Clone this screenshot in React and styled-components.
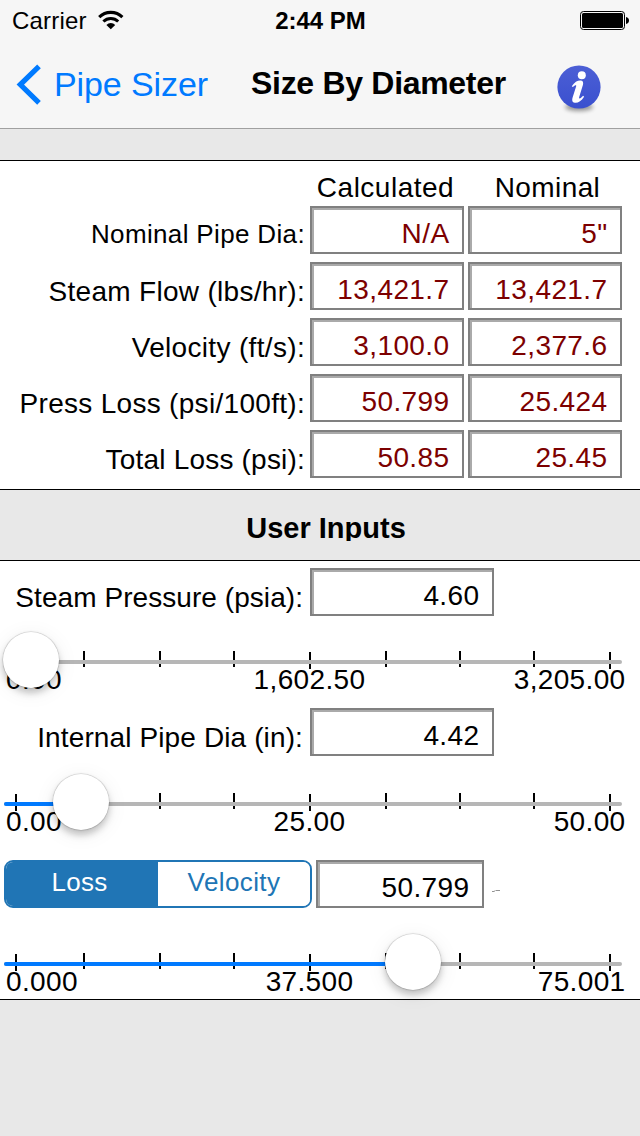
import React from 'react';
import styled, { createGlobalStyle } from 'styled-components';

const Global = createGlobalStyle`
  * { box-sizing: border-box; }
  body {
    margin: 0;
    background: #e8e8e8;
    color: #000;
    font-family: "Liberation Sans", Arial, sans-serif;
  }
`;

const Screen = styled.div`
  display: flex;
  flex-direction: column;
  width: 640px;
  height: 1136px;
  overflow: hidden;
  background: #e8e8e8;
`;

const Text = styled.span`
  display: block;
  white-space: nowrap;
  font-size: ${p => p.$size || 28}px;
  font-weight: ${p => (p.$bold ? 700 : 400)};
  line-height: ${p => p.$line || 40}px;
  letter-spacing: ${p => p.$track || 0}px;
`;

const Header = styled.header`
  height: 129px;
  background: #f6f6f6;
  border-bottom: 1px solid #a0a0a0;
`;

const StatusBar = styled.div`
  display: grid;
  grid-template-columns: 1fr auto 1fr;
  height: 40px;
  padding: 0 11px 0 12px;
`;

const Carrier = styled.div`
  display: flex;
  gap: 11px;
  svg { margin-top: 10px; }
`;

const BatterySlot = styled.div`
  display: flex;
  justify-content: flex-end;
  padding-top: 11px;
`;

const NavBar = styled.nav`
  display: grid;
  grid-template-columns: 251px 306px 1fr;
  height: 88px;
`;

const BackButton = styled.div`
  display: flex;
  gap: 12px;
  padding-left: 16px;
  color: #007aff;
  svg { margin-top: 24px; }
`;

const InfoButton = styled.div`
  padding-top: 23px;
`;

const Panel = styled.section`
  background: #fff;
  border-top: 1px solid #000;
  border-bottom: 1px solid #000;
`;

const Results = styled(Panel)`
  height: 330px;
  margin-top: 31px;
`;

const Inputs = styled(Panel)`
  height: 440px;
`;

const ColumnHeads = styled.div`
  display: grid;
  grid-template-columns: 151px 173px;
  height: 45px;
  padding-top: 7px;
  margin-left: 310px;
  text-align: center;
`;

const ResultRow = styled.div`
  display: grid;
  grid-template-columns: 306px 154px 154px;
  column-gap: 4px;
  height: 56px;
`;

const RowLabel = styled.div`
  display: flex;
  justify-content: flex-end;
  padding-top: ${p => p.$top}px;
  padding-right: ${p => p.$right || 0}px;
`;

const Field = styled.div`
  width: ${p => p.$width}px;
  height: 48px;
  padding: 4px 12.5px 0 0;
  border: 2px solid #808080;
  box-shadow: inset 2px 2px 0 #aaa;
  background: #fff;
  color: ${p => p.$color || '#000'};
  font-size: 28px;
  line-height: 44px;
  letter-spacing: 0.4px;
  text-align: right;
`;

const SectionTitle = styled.h2`
  display: flex;
  justify-content: center;
  height: 70px;
  margin: 0;
  padding: 18px 0 0 12px;
`;

const TitleClip = styled.div`
  height: 33px;
  overflow: hidden;
`;

const InputRow = styled.div`
  display: grid;
  grid-template-columns: 303px auto;
  column-gap: 7px;
  justify-content: start;
  height: 48px;
  margin-top: ${p => p.$top}px;
`;

const ModeRow = styled.div`
  display: flex;
  gap: 4px;
  height: 48px;
  margin-top: ${p => p.$top}px;
  padding-left: 4px;
  svg { margin: 28px 0 0 4px; }
`;

const Segmented = styled.div`
  display: grid;
  grid-template-columns: 152px 152px;
  width: 308px;
  border: 2px solid #2075b5;
  border-radius: 9px;
  overflow: hidden;
`;

const Segment = styled.div`
  display: flex;
  justify-content: center;
  padding-right: ${p => (p.$active ? 5 : 0)}px;
  background: ${p => (p.$active ? '#2075b5' : '#fff')};
  color: ${p => (p.$active ? '#fff' : '#2075b5')};
`;

const SliderBox = styled.div`
  display: grid;
  grid-template-columns: 640px;
  grid-template-rows: 62px;
  margin-top: ${p => p.$top}px;
  > * { grid-area: 1 / 1; }
`;

const Ticks = styled.div`
  display: grid;
  grid-template-columns: 68px 76px 74px 76px 76px 74px 74px 76px 2px;
  margin: 19px 0 0 15px;
`;

const Tick = styled.i`
  width: 2px;
  height: ${p => (p.$major ? 17 : 16)}px;
  margin-top: ${p => (p.$major ? 1 : 0)}px;
  background: #000;
`;

const ScaleLabels = styled.div`
  display: grid;
  grid-template-columns: 199px 209px 218px;
  padding: 28px 0 0 6px;
  > :nth-child(2) { text-align: center; }
  > :last-child { text-align: right; padding-right: 6.5px; }
`;

const Track = styled.div`
  width: 618px;
  height: 4px;
  margin: 28px 0 0 4px;
  border-radius: 2px;
  background: #b6b6b6;
`;

const Fill = styled.div`
  height: 4px;
  border-radius: 2px;
  background: #007aff;
`;

const Thumb = styled.div`
  width: 56px;
  height: 56px;
  border-radius: 50%;
  background: #fff;
  box-shadow: 0 0 1px 0.5px rgba(0, 0, 0, 0.2), 0 5px 7px rgba(0, 0, 0, 0.22), 0 4px 22px rgba(0, 0, 0, 0.07);
  z-index: 1;
`;

const WifiIcon = () => (
  <svg width="26" height="20" viewBox="0 0 26 20" fill="none" stroke="#000">
    <path d="M1.2 7.1a16.6 16.6 0 0 1 23.2 0" strokeWidth="3.1" />
    <path d="M5.4 11.5a10.6 10.6 0 0 1 14.8 0" strokeWidth="3" />
    <path d="M12.8 19.2 8.4 14.9a6.3 6.3 0 0 1 8.8 0z" fill="#000" stroke="none" />
  </svg>
);

const BatteryIcon = () => (
  <svg width="49" height="19" viewBox="0 0 49 19">
    <rect x="0.5" y="0.5" width="44" height="18" rx="3" fill="none" stroke="#000" />
    <rect x="2" y="2" width="41" height="15" rx="1.5" />
    <path d="M46 6c2 .4 3 1.7 3 3.5s-1 3.1-3 3.5z" />
  </svg>
);

const ChevronIcon = () => (
  <svg width="26" height="42" viewBox="0 0 26 42" fill="none" stroke="#007aff" strokeWidth="5.2">
    <path d="M23 2.3 4.3 20.6 23 38.9" />
  </svg>
);

const InfoIcon = () => (
  <svg width="46" height="54" viewBox="0 0 46 54">
    <defs>
      <filter id="soft" x="-20%" y="-60%" width="140%" height="220%">
        <feGaussianBlur stdDeviation="2" />
      </filter>
      <linearGradient id="disc" x1="0" y1="0" x2="0" y2="1">
        <stop offset="0" stopColor="#4c5fd5" />
        <stop offset="1" stopColor="#3a50cf" />
      </linearGradient>
    </defs>
    <ellipse cx="22" cy="44" rx="14" ry="4" fill="#000" opacity="0.4" filter="url(#soft)" />
    <circle cx="22" cy="24" r="21.6" fill="url(#disc)" />
    <circle cx="24.800" cy="12.2" r="4" fill="#fff" />
    <path d="M14.8 23.2c2.800-4.600 6.700-6.200 9.200-5.700 2.200.4 2.500 2.400 1.900 4.600l-3.700 11.900c-.4 1.500.5 1.900 1.600 1l2.300-2.200 1 1c-2.900 4.400-6.300 6.500-9.300 6-2.600-.4-3-2.700-2.200-5.300l3.500-11c.4-1.400-.3-1.700-1.300-.9l-2 1.500z" fill="#fff" />
  </svg>
);

const SmudgeMark = () => (
  <svg width="10" height="5" viewBox="0 0 10 5" fill="none" stroke="#777">
    <path d="M0 3.500h2l1-.7M3.500 2.500h4.500" strokeWidth="0.8" />
  </svg>
);

const results = [
  { label: 'Nominal Pipe Dia:', calc: 'N/A', nominal: '5"', top: 8, size: 26, track: 0.35 },
  { label: 'Steam Flow (lbs/hr):', calc: '13,421.7', nominal: '13,421.7', top: 10, track: 0.3 },
  { label: 'Velocity (ft/s):', calc: '3,100.0', nominal: '2,377.6', top: 10, track: 0.33 },
  { label: 'Press Loss (psi/100ft):', calc: '50.799', nominal: '25.424', top: 10, track: 0.3 },
  { label: 'Total Loss (psi):', calc: '50.85', nominal: '25.45', top: 10, track: 0.2 },
];

function Slider({ top, labels, center, fill }) {
  return (
    <SliderBox $top={top}>
      <Ticks>
        {[0, 1, 2, 3, 4, 5, 6, 7, 8].map(i => <Tick key={i} $major={i % 4 === 0} />)}
      </Ticks>
      <ScaleLabels>
        {labels.map(l => <Text key={l} $track={0.35}>{l}</Text>)}
      </ScaleLabels>
      <Track>{fill && <Fill style={{ width: center - 4 }} />}</Track>
      <Thumb style={{ marginLeft: center - 28 }} />
    </SliderBox>
  );
}

export default function App() {
  return (
    <Screen>
      <Global />
      <Header>
        <StatusBar>
          <Carrier>
            <Text $size={24} $line={41} $track={0.2}>Carrier</Text>
            <WifiIcon />
          </Carrier>
          <Text $size={24} $line={41} $bold>2:44 PM</Text>
          <BatterySlot><BatteryIcon /></BatterySlot>
        </StatusBar>
        <NavBar>
          <BackButton>
            <ChevronIcon />
            <Text $size={34} $line={88} $track={-0.1}>Pipe Sizer</Text>
          </BackButton>
          <Text $size={32} $line={86} $track={-0.3} $bold>Size By Diameter</Text>
          <InfoButton><InfoIcon /></InfoButton>
        </NavBar>
      </Header>

      <Results>
        <ColumnHeads>
          <Text $track={0.5}>Calculated</Text>
          <Text $track={0.4}>Nominal</Text>
        </ColumnHeads>
        {results.map(r => (
          <ResultRow key={r.label}>
            <RowLabel $top={r.top} $right={1}><Text $size={r.size} $track={r.track}>{r.label}</Text></RowLabel>
            <Field $width={154} $color="#7c0000">{r.calc}</Field>
            <Field $width={154} $color="#7c0000">{r.nominal}</Field>
          </ResultRow>
        ))}
      </Results>

      <SectionTitle>
        <TitleClip><Text $size={29} $bold>User Inputs</Text></TitleClip>
      </SectionTitle>

      <Inputs>
        <InputRow $top={7}>
          <RowLabel $top={10}><Text $track={0.06}>Steam Pressure (psia):</Text></RowLabel>
          <Field $width={184}>4.60</Field>
        </InputRow>
        <Slider top={16} labels={['0.00', '1,602.50', '3,205.00']} center={31} />
        <InputRow $top={14}>
          <RowLabel $top={10}><Text $track={0.12}>Internal Pipe Dia (in):</Text></RowLabel>
          <Field $width={184}>4.42</Field>
        </InputRow>
        <Slider top={18} labels={['0.00', '25.00', '50.00']} center={81} fill />
        <ModeRow $top={24}>
          <Segmented>
            <Segment $active><Text $size={26} $track={0.3}>Loss</Text></Segment>
            <Segment><Text $size={26} $track={0.4}>Velocity</Text></Segment>
          </Segmented>
          <Field $width={168}>50.799</Field>
          <SmudgeMark />
        </ModeRow>
        <Slider top={26} labels={['0.000', '37.500', '75.001']} center={413} fill />
      </Inputs>
    </Screen>
  );
}
